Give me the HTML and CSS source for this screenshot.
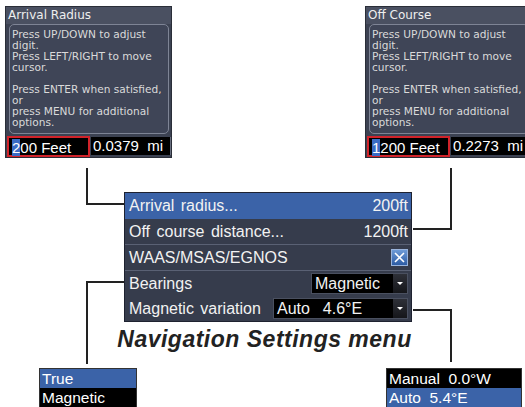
FILE: index.html
```html
<!DOCTYPE html>
<html lang="en">
<head>
    <meta charset="UTF-8">
    <meta name="viewport" content="width=device-width, initial-scale=1.0">
    <title>Navigation Settings menu</title>
    <link rel="stylesheet" href="styles.css">
</head>
<body>
    <div class="diagram">
        <!-- Arrival radius edit dialog -->
        <div class="dialog dialog-arrival">
            <div class="dialog-title">Arrival Radius</div>
            <div class="dialog-help">
                Press UP/DOWN to adjust<br>digit.<br>
                Press LEFT/RIGHT to move<br>cursor.<br><br>
                Press ENTER when satisfied,<br>or<br>
                press MENU for additional<br>options.
            </div>
            <div class="dialog-fields">
                <div class="field field-edit"><span class="cursor">2</span>00 Feet</div>
                <div class="field field-conv">0.0379&nbsp; mi</div>
            </div>
        </div>

        <!-- Off course edit dialog -->
        <div class="dialog dialog-offcourse">
            <div class="dialog-title">Off Course</div>
            <div class="dialog-help">
                Press UP/DOWN to adjust<br>digit.<br>
                Press LEFT/RIGHT to move<br>cursor.<br><br>
                Press ENTER when satisfied,<br>or<br>
                press MENU for additional<br>options.
            </div>
            <div class="dialog-fields">
                <div class="field field-edit"><span class="cursor">1</span>200 Feet</div>
                <div class="field field-conv">0.2273&nbsp; mi</div>
            </div>
        </div>

        <!-- leader lines -->
        <div class="leader leader-arrival"></div>
        <div class="leader leader-offcourse"></div>
        <div class="leader leader-bearings"></div>
        <div class="leader leader-variation"></div>

        <!-- main menu -->
        <div class="menu">
            <div class="menu-row selected">
                <span>Arrival radius...</span><span>200ft</span>
            </div>
            <div class="menu-row">
                <span>Off course distance...</span><span>1200ft</span>
            </div>
            <div class="menu-row">
                <span>WAAS/MSAS/EGNOS</span>
                <span class="checkbox">
                    <svg width="15" height="15" viewBox="0 0 15 15">
                        <path d="M3 3 L12 12 M12 3 L3 12" stroke="#fff" stroke-width="1.6" fill="none"/>
                    </svg>
                </span>
            </div>
            <div class="menu-row no-line">
                <span>Bearings</span>
                <span class="select select-bearings">
                    <span class="select-value">Magnetic</span><span class="select-arrow"></span>
                </span>
            </div>
            <div class="menu-row no-line">
                <span>Magnetic variation</span>
                <span class="select select-variation">
                    <span class="select-value">Auto&nbsp; 4.6°E</span><span class="select-arrow"></span>
                </span>
            </div>
        </div>

        <div class="caption">Navigation Settings menu</div>

        <!-- open drop-down lists -->
        <div class="list list-bearings">
            <div class="list-item selected">True</div>
            <div class="list-item">Magnetic</div>
        </div>
        <div class="list list-variation">
            <div class="list-item">Manual&nbsp; 0.0°W</div>
            <div class="list-item selected">Auto&nbsp; 5.4°E</div>
        </div>
    </div>
</body>
</html>
```

FILE: styles.css
```css
body {
    margin: 0;
    padding: 0;
    background-color: white;
    font-family: "Liberation Sans", Arial, sans-serif;
}
.diagram {
    position: relative;
    width: 525px;
    height: 407px;
    overflow: hidden;
}

/* edit dialogs */
.dialog {
    position: absolute;
    top: 6px;
    width: 167px;
    height: 152px;
    background-color: #3c4252;
    box-sizing: border-box;
    border: 1px solid #2a2e38;
}
.dialog-arrival {
    left: 5px;
}
.dialog-offcourse {
    left: 365px;
}
.dialog-title {
    height: 17px;
    line-height: 17px;
    padding-left: 2px;
    background-color: #4a5061;
    color: #eeeeee;
    font-family: "DejaVu Sans", sans-serif;
    font-size: 12px;
}
.dialog-help {
    height: 110px;
    box-sizing: border-box;
    margin: 0 2px 0 3px;
    padding: 4px 2px 0 2px;
    border: 1px solid #7e8495;
    border-radius: 5px;
    background-color: #3f4557;
    color: #dadada;
    font-family: "DejaVu Sans", sans-serif;
    font-size: 10.6px;
    line-height: 11px;
}
.dialog-fields {
    display: flex;
    margin-top: 2px;
    padding-left: 1px;
}
.field {
    height: 21px;
    box-sizing: border-box;
    line-height: 19px;
    font-size: 15px;
    color: white;
    background-color: black;
}
.field-edit {
    width: 83px;
    border: 2px solid #d2232a;
    padding-left: 3px;
}
.field-conv {
    width: 80px;
    margin-left: 1px;
    margin-top: 1px;
    height: 18px;
    line-height: 18px;
    padding-left: 2px;
    border-right: 1px solid #6a7080;
}
.cursor {
    display: inline-block;
    background-color: #3a6bc4;
    line-height: 17px;
}

/* leader lines */
.leader {
    position: absolute;
    border-color: #222;
    border-style: solid;
    border-width: 0;
}
.leader-arrival {
    left: 86px;
    top: 168px;
    width: 36px;
    height: 35px;
    border-left-width: 2px;
    border-bottom-width: 2px;
}
.leader-offcourse {
    left: 413px;
    top: 168px;
    width: 37px;
    height: 60px;
    border-right-width: 2px;
    border-bottom-width: 2px;
}
.leader-bearings {
    left: 86px;
    top: 281px;
    width: 36px;
    height: 81px;
    border-left-width: 2px;
    border-top-width: 2px;
}
.leader-variation {
    left: 413px;
    top: 309px;
    width: 37px;
    height: 51px;
    border-right-width: 2px;
    border-top-width: 2px;
}

/* menu */
.menu {
    position: absolute;
    left: 124px;
    top: 192px;
    width: 288px;
    box-sizing: border-box;
    border: 1px solid #1e2230;
    background-color: #363c4c;
    color: #f2f2f2;
    font-size: 16px;
}
.menu-row {
    display: flex;
    justify-content: space-between;
    align-items: center;
    height: 26px;
    padding: 0 3px 0 4px;
    border-bottom: 1px solid #5a6174;
    box-sizing: border-box;
    word-spacing: 2px;
}
.menu-row.no-line {
    border-bottom: none;
    height: 25px;
}
.menu-row.selected {
    background-color: #3b63a8;
    border-bottom-color: #3b63a8;
}
.checkbox {
    display: flex;
    width: 15px;
    height: 15px;
    border: 1px solid #9ab4dc;
    background: linear-gradient(#6d9ad6, #2d5ca4);
}
.select {
    display: flex;
    height: 21px;
    background-color: black;
    border: 1px solid #4a5060;
    box-sizing: border-box;
}
.select-bearings {
    width: 97px;
}
.select-variation {
    width: 135px;
}
.select-value {
    flex: 1;
    line-height: 19px;
    padding-left: 3px;
}
.select-arrow {
    position: relative;
    width: 14px;
    background: linear-gradient(#2e3038, #15161a);
}
.select-arrow::after {
    content: "";
    position: absolute;
    left: 4px;
    top: 8px;
    border-left: 3px solid transparent;
    border-right: 3px solid transparent;
    border-top: 3px solid white;
}

/* caption */
.caption {
    position: absolute;
    left: 0;
    top: 326px;
    width: 529px;
    text-align: center;
    font-size: 23px;
    font-weight: bold;
    font-style: italic;
    letter-spacing: 0.5px;
    color: #222;
}

/* drop-down lists */
.list {
    position: absolute;
    top: 368px;
    background-color: black;
    border: 1px solid #333;
    color: white;
    font-size: 15.5px;
}
.list-bearings {
    left: 39px;
    width: 96px;
}
.list-variation {
    left: 386px;
    width: 134px;
}
.list-item {
    height: 19px;
    line-height: 19px;
    padding-left: 2px;
}
.list-item.selected {
    background-color: #3b63a8;
}
```
